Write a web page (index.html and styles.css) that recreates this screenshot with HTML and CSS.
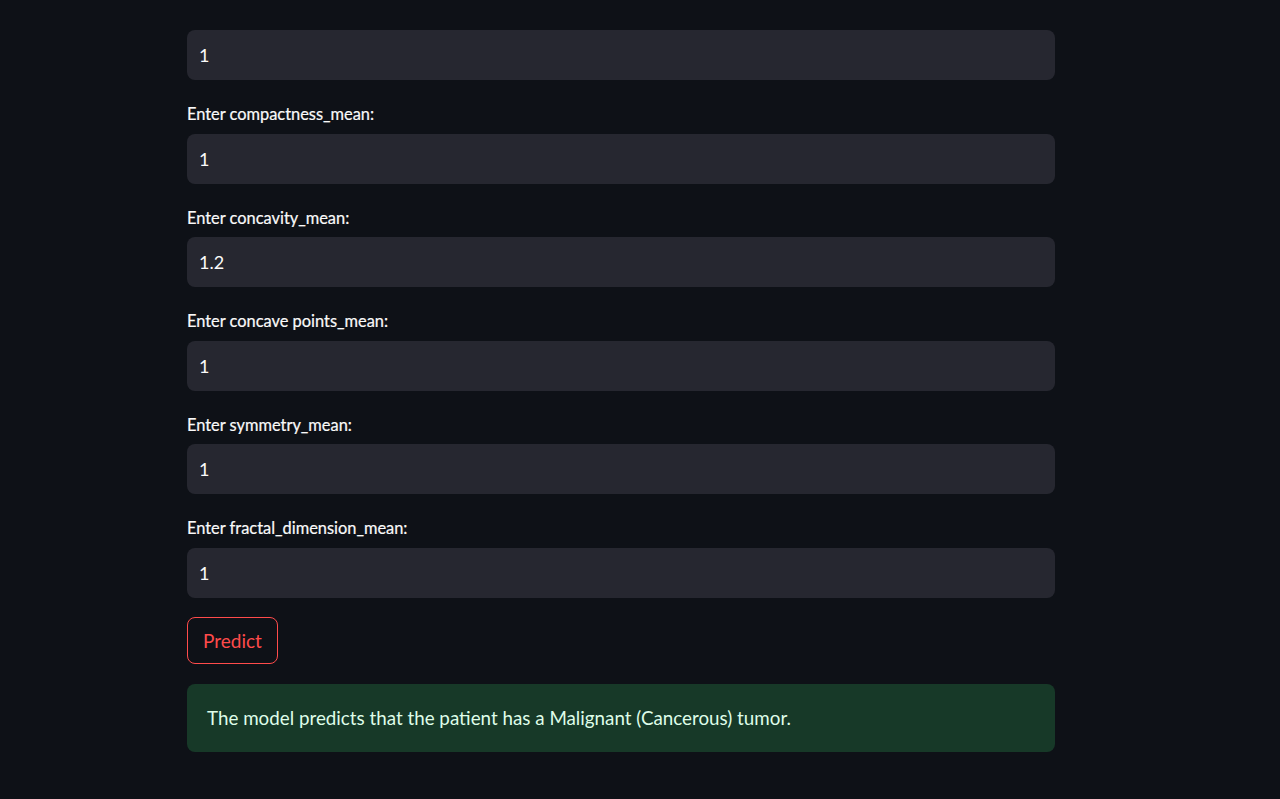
FILE: index.html
```html
<!DOCTYPE html>
<html lang="en">
<head>
<meta charset="utf-8">
<title>Breast Cancer Prediction</title>
<link rel="stylesheet" href="styles.css">
</head>
<body>
<main class="main">
  <div class="block">
    <div class="field first">
      <div class="input">1</div>
    </div>
    <div class="field">
      <label class="label">Enter compactness_mean:</label>
      <div class="input">1</div>
    </div>
    <div class="field">
      <label class="label">Enter concavity_mean:</label>
      <div class="input">1.2</div>
    </div>
    <div class="field">
      <label class="label">Enter concave points_mean:</label>
      <div class="input">1</div>
    </div>
    <div class="field">
      <label class="label">Enter symmetry_mean:</label>
      <div class="input">1</div>
    </div>
    <div class="field">
      <label class="label">Enter fractal_dimension_mean:</label>
      <div class="input">1</div>
    </div>
    <div class="btn-row">
      <button class="btn">Predict</button>
    </div>
    <div class="alert">The model predicts that the patient has a Malignant (Cancerous) tumor.</div>
  </div>
</main>
</body>
</html>
```

FILE: styles.css
```css
html, body {
  margin: 0;
  padding: 0;
  background: #0e1117;
  height: 100%;
  overflow: hidden;
}
body {
  font-family: "Lato", "Source Sans Pro", "Noto Sans", sans-serif;
  color: #fafafa;
}
.main {
  padding-top: 30px;
  padding-left: 187px;
}
.block {
  width: 868px;
  display: flex;
  flex-direction: column;
  gap: 20px;
}
.field {
  display: flex;
  flex-direction: column;
}
.label {
  font-size: 16.4px;
  line-height: 28px;
  height: 28px;
  margin-bottom: 5.5px;
  color: #fafafa;
  -webkit-text-stroke: 0.2px #fafafa;
}
.input {
  height: 50px;
  box-sizing: border-box;
  background: #262730;
  border-radius: 8px;
  padding: 0 12px;
  display: flex;
  align-items: center;
  font-size: 18px;
  color: #fafafa;
}
.btn-row {
  display: flex;
  margin-top: -1px;
}
.btn {
  height: 47px;
  padding: 0 15px;
  border: 1px solid #ff4b4b;
  border-radius: 8px;
  background: transparent;
  color: #ff4b4b;
  font-family: inherit;
  font-size: 19px;
}
.alert {
  height: 68px;
  box-sizing: border-box;
  background: #173928;
  border-radius: 8px;
  padding: 0 20px;
  display: flex;
  align-items: center;
  font-size: 18.8px;
  color: #dffde9;
}
```
